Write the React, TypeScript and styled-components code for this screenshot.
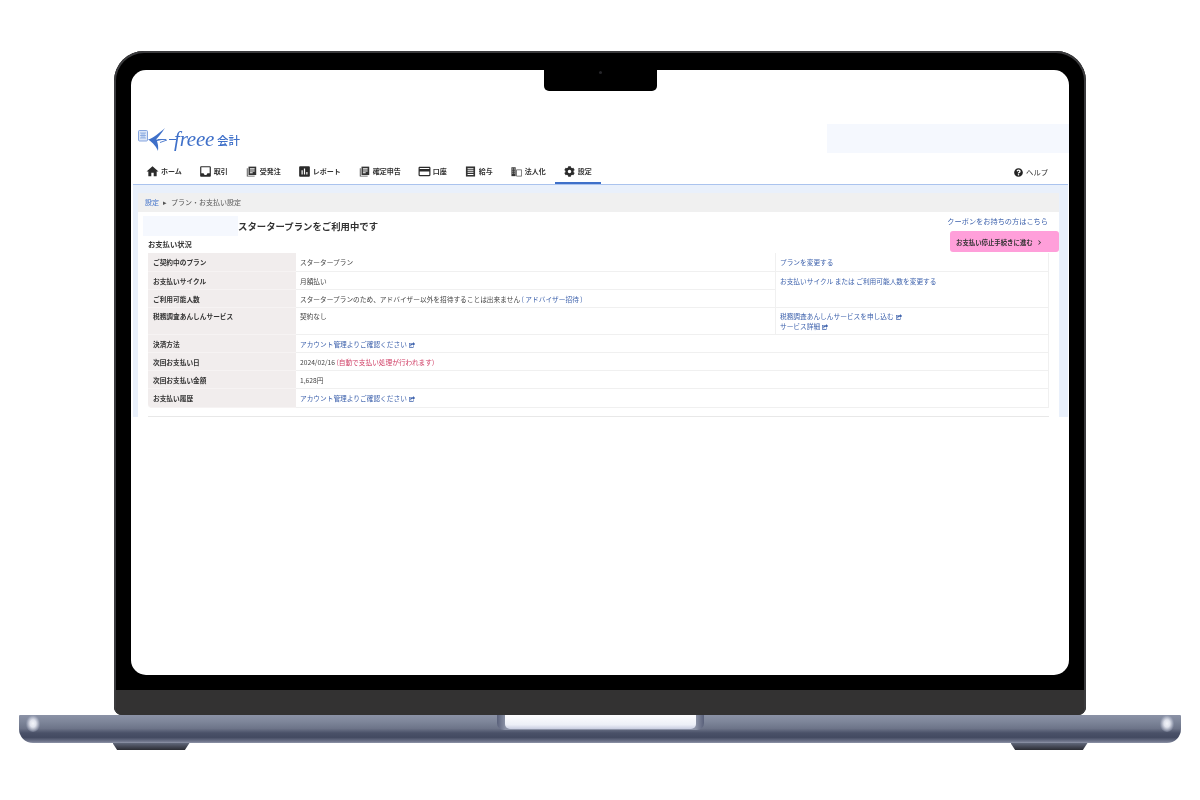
import React from "react";
import styled, { createGlobalStyle } from "styled-components";
import { FaCog, FaQuestionCircle, FaShareSquare } from "react-icons/fa";
import { MdAssessment, MdChevronRight, MdCreditCard, MdHome, MdInbox } from "react-icons/md";

const GlobalStyle = createGlobalStyle`
  html, body {
    margin: 0;
    padding: 0;
    background: #fff;
  }
  body {
    font-family: "Noto Sans CJK JP", "Liberation Sans", sans-serif;
    color: #333;
  }
`;

const Stage = styled.div`
  width: 1200px;
  height: 800px;
  overflow: hidden;
  padding-top: 51px;
  box-sizing: border-box;
`;

const Lid = styled.div`
  width: 972px;
  height: 664px;
  margin: 0 auto;
  box-sizing: border-box;
  padding: 19px 17px 0;
  background: #000;
  border-radius: 30px 30px 8px 8px;
  box-shadow: inset 0 0 0 2px #3b3b3d;
  position: relative;
  overflow: hidden;
  display: flex;
  flex-direction: column;
`;

const Notch = styled.div`
  position: absolute;
  top: 19px;
  left: 430px;
  width: 113px;
  height: 21px;
  background: #000;
  border-radius: 0 0 5px 5px;
  z-index: 2;

  &::after {
    content: "";
    position: absolute;
    top: 1px;
    left: 55px;
    width: 3px;
    height: 3px;
    border-radius: 50%;
    background: #26262a;
  }
`;

const Screen = styled.div`
  height: 605px;
  flex: none;
  background: #fff;
  border-radius: 15px;
  overflow: hidden;
`;

const Blurred = styled.div`
  filter: blur(0.5px);
`;

const Chin = styled.div`
  margin: 15px -15px 0;
  flex: 1;
  background: #333232;
  border-radius: 0 0 7px 7px;
`;

const Base = styled.div`
  width: 1162px;
  height: 28px;
  margin: 0 auto;
  position: relative;
  border-radius: 1px 1px 14px 14px;
  background: linear-gradient(
    180deg,
    #8b92a6 0%,
    #7d8599 25%,
    #6d7489 48%,
    #4a5168 64%,
    #434a61 80%,
    #6f758b 94%,
    #8f95a8 100%
  );
`;

const BaseGlow = styled.div<{ $side: "left" | "right" }>`
  position: absolute;
  top: 0;
  ${(p) => p.$side}: 7px;
  width: 14px;
  height: 17px;
  border-radius: 50%;
  background: radial-gradient(ellipse at center, #f3f5fa 0%, #dfe2ec 30%, rgba(150, 157, 178, 0.55) 65%, rgba(125, 133, 153, 0) 100%);
`;

const Hinge = styled.div`
  position: absolute;
  top: 0;
  left: 478px;
  width: 207px;
  height: 15px;
  padding: 0 8px;
  box-sizing: border-box;
  background: linear-gradient(90deg, #59607a 0%, #8b92a6 4%, #8b92a6 96%, #59607a 100%);
  border-radius: 0 0 7px 7px;
`;

const HingeLight = styled.div`
  height: 14px;
  background: linear-gradient(180deg, #fdfdff 0%, #eceff7 70%, #c7cce0 100%);
  border-radius: 0 0 5px 5px;
`;

const Feet = styled.div`
  width: 975px;
  margin: 0 auto;
  display: flex;
  justify-content: space-between;
`;

const Foot = styled.div`
  width: 77px;
  height: 7px;
  clip-path: polygon(0 0, 100% 0, 94% 100%, 6% 100%);
  background: linear-gradient(180deg, #60677a 0%, #3d404c 65%, #2a2c33 100%);
`;

const Header = styled.header`
  height: 90px;
  padding: 54px 0 0 7px;
  box-sizing: border-box;
  display: flex;
  justify-content: space-between;
`;

const Logo = styled.div`
  display: flex;
  align-items: center;
  height: 30px;
  color: #3f70c9;
`;

const LogoWord = styled.span`
  font-family: "Liberation Serif", serif;
  font-style: italic;
  font-size: 21px;
  letter-spacing: -0.2px;
  margin-left: -3px;
  width: 43px;
`;

const LogoProduct = styled.span`
  font-size: 11.5px;
  font-weight: 500;
  margin-top: 1px;
`;

const HeaderBanner = styled.div`
  width: 242px;
  height: 29px;
  background: #f5f8fe;
`;

const Nav = styled.nav`
  height: 24px;
  padding: 0 21px 0 7px;
  display: flex;
  align-items: stretch;
`;

const NavItem = styled.a<{ $active?: boolean }>`
  display: flex;
  align-items: center;
  gap: 3px;
  padding: 0 9px;
  font-size: 7px;
  font-weight: 700;
  color: #333;
  height: 24px;
  box-sizing: border-box;
  border-bottom: ${(p) => (p.$active ? "2px solid #3f70c9" : "2px solid transparent")};

  svg {
    width: 11px;
    height: 11px;
    flex: none;
    color: #2b2b2b;
  }
`;

const HomeIcon = styled(MdHome)`
  transform: scale(1.3);
`;

const TrayIcon = styled(MdInbox)`
  transform: scale(1.3);
`;

const ReportIcon = styled(MdAssessment)`
  transform: scale(1.3);
`;

const CardIcon = styled(MdCreditCard)`
  transform: scale(1.3);
`;

const HelpLink = styled.a`
  margin-left: auto;
  display: flex;
  align-items: center;
  gap: 3px;
  height: 24px;
  font-size: 7.3px;
  color: #333;

  svg {
    width: 9px;
    height: 9px;
    color: #222;
  }
`;

const Page = styled.main`
  margin: 0 1px 0 2px;
  padding: 8px 9px 0 5px;
  background: #e9f0fb;
  border-top: 1px solid #aac3ee;
`;

const Breadcrumb = styled.div`
  height: 19px;
  padding: 0 7px 2px;
  box-sizing: border-box;
  display: flex;
  align-items: center;
  gap: 4px;
  background: #f0f0f0;
  font-size: 7px;
  color: #555;
`;

const CrumbLink = styled.a`
  color: #3f70c9;
`;

const Panel = styled.section`
  background: #fff;
  padding: 0 10px 8px;
  height: 205px;
  box-sizing: border-box;
`;

const PanelTop = styled.div`
  height: 41px;
  display: flex;
  justify-content: space-between;
`;

const TitleColumn = styled.div`
  margin-left: -5px;
  padding-top: 4px;
`;

const TitleRow = styled.div`
  display: flex;
  align-items: center;
  height: 20px;
`;

const TitleBlank = styled.div`
  width: 95px;
  height: 20px;
  background: #f5f8fe;
`;

const Title = styled.h1`
  margin: 0;
  font-size: 9.4px;
  font-weight: 700;
  color: #333;
`;

const SectionHeading = styled.h2`
  margin: 3px 0 0 5px;
  font-size: 7.3px;
  line-height: 11px;
  font-weight: 700;
  color: #333;
`;

const ActionColumn = styled.div`
  margin-right: -10px;
  display: flex;
  flex-direction: column;
  align-items: flex-end;
`;

const CouponLink = styled.a`
  margin: 4px 11px 0 0;
  font-size: 7.2px;
  line-height: 10px;
  color: #3f63ad;
`;

const StopButton = styled.a`
  margin-top: 5px;
  width: 109px;
  height: 21px;
  padding: 2px 15px 0 6px;
  box-sizing: border-box;
  display: flex;
  align-items: center;
  justify-content: space-between;
  border-radius: 3px;
  background: #ff9fda;
  font-size: 6.4px;
  font-weight: 700;
  color: #333;

  svg {
    width: 9px;
    height: 9px;
  }
`;

const Table = styled.table`
  width: 901px;
  table-layout: fixed;
  border-collapse: separate;
  border-spacing: 0;
  font-size: 6.7px;
  color: #444;
`;

const Row = styled.tr<{ $h: number; $tight?: boolean }>`
  height: ${(p) => p.$h}px;

  th,
  td {
    padding-top: ${(p) => (p.$tight ? "3px" : "4px")};
  }
`;

const Label = styled.th`
  width: 148px;
  padding: 0 5px;
  box-sizing: border-box;
  vertical-align: top;
  text-align: left;
  font-weight: 700;
  color: #333;
  background: #f1eded;
  border-bottom: 1px solid #f6f3f3;
  line-height: 11px;

  tr:last-child & {
    border-radius: 0 0 0 4px;
  }
`;

const Cell = styled.td`
  padding: 0 4px;
  box-sizing: border-box;
  vertical-align: top;
  line-height: 11px;
  border-bottom: 1px solid #f0f0f0;
  border-right: 1px solid #f0f0f0;
`;

const ValueCell = styled(Cell)`
  width: 479px;
  border-right: ${(p) => (p.colSpan === 2 ? "1px solid #f0f0f0" : "none")};
`;

const ActionCell = styled(Cell)`
  border-left: 1px solid #f0f0f0;
  line-height: 10px;
`;

const TextLink = styled.a`
  color: #3f63ad;
`;

const Warning = styled.span`
  color: #cf3a62;
`;

const External = styled(FaShareSquare)`
  width: 6px;
  height: 6px;
  margin-left: 2px;
  vertical-align: -0.5px;
`;

const TableEnd = styled.div`
  margin-top: 8px;
  height: 1px;
  background: #e8e8e8;
`;

const LogoMark = () => (
  <svg width="39" height="25" viewBox="0 0 39 25" fill="none">
    <rect x="0.5" y="3.5" width="9" height="10.5" rx="1" fill="#dce6f7" stroke="#6d93d8" strokeWidth="0.8" />
    <path d="M2 6h6M2 8.5h6M2 11h6M4 6v5M6 6v5" stroke="#6d93d8" strokeWidth="0.6" />
    <path d="M10 12.5 C15 11.5 21 6 27 1 C23 7 20.5 10 18 12.5 L27 12.2 L19 14 C20 17.5 20.5 20 20 24 C18 19.5 15.5 16 10 12.5Z" fill="#3f70c9" />
    <path d="M20 12.5h8M22 15.5l7-2.5" stroke="#3f70c9" strokeWidth="0.9" />
    <path d="M31 12.5h7" stroke="#3f70c9" strokeWidth="1" />
  </svg>
);

const DocsIcon = () => (
  <svg viewBox="0 0 14 14">
    <path d="M1 3h1.2v9.3H11V13.5H1z" fill="#555" />
    <path d="M3.2 .8h9.8v10.7H3.2z" fill="#333" />
    <path d="M5 3h6v1.6H5zM5 5.8h6v1.2H5zM5 8h3.5v1.2H5z" fill="#fff" />
  </svg>
);

const LedgerIcon = () => (
  <svg viewBox="0 0 12 12">
    <path d="M1 .5h10v11H1z" fill="#333" />
    <path d="M2.8 2.5h6.4v1H2.8zM2.8 4.6h6.4v1H2.8zM2.8 6.7h6.4v1H2.8zM2.8 8.8h6.4v1H2.8z" fill="#fff" />
  </svg>
);

const BuildingIcon = () => (
  <svg viewBox="0 0 13 12">
    <path d="M.5 1h5v10.5h-5z" fill="#333" />
    <path d="M1.5 2.5h1v1h-1zM3.4 2.5h1v1h-1zM1.5 5h1v1h-1zM3.4 5h1v1h-1zM1.5 7.5h1v1h-1zM3.4 7.5h1v1h-1z" fill="#fff" />
    <path d="M6.5 4h6v7.5h-6z" fill="none" stroke="#555" strokeWidth="0.9" />
  </svg>
);

const navItems: { label: string; icon: React.ReactNode; active?: boolean }[] = [
  { label: "ホーム", icon: <HomeIcon /> },
  { label: "取引", icon: <TrayIcon /> },
  { label: "受発注", icon: <DocsIcon /> },
  { label: "レポート", icon: <ReportIcon /> },
  { label: "確定申告", icon: <DocsIcon /> },
  { label: "口座", icon: <CardIcon /> },
  { label: "給与", icon: <LedgerIcon /> },
  { label: "法人化", icon: <BuildingIcon /> },
  { label: "設定", icon: <FaCog />, active: true },
];

const App: React.FC = () => (
  <Stage>
    <GlobalStyle />
    <Lid>
      <Notch />
      <Screen>
        <Blurred>
          <Header>
            <Logo>
              <LogoMark />
              <LogoWord>freee</LogoWord>
              <LogoProduct>会計</LogoProduct>
            </Logo>
            <HeaderBanner />
          </Header>
          <Nav>
            {navItems.map((item) => (
              <NavItem key={item.label} $active={item.active}>
                {item.icon}
                {item.label}
              </NavItem>
            ))}
            <HelpLink>
              <FaQuestionCircle />
              ヘルプ
            </HelpLink>
          </Nav>
          <Page>
            <Breadcrumb>
              <CrumbLink>設定</CrumbLink>
              <span>▸</span>
              <span>プラン・お支払い設定</span>
            </Breadcrumb>
            <Panel>
              <PanelTop>
                <TitleColumn>
                  <TitleRow>
                    <TitleBlank />
                    <Title>スタータープランをご利用中です</Title>
                  </TitleRow>
                  <SectionHeading>お支払い状況</SectionHeading>
                </TitleColumn>
                <ActionColumn>
                  <CouponLink>クーポンをお持ちの方はこちら</CouponLink>
                  <StopButton>
                    お支払い停止手続きに進む
                    <MdChevronRight />
                  </StopButton>
                </ActionColumn>
              </PanelTop>
              <Table>
                <tbody>
                  <Row $h={19}>
                    <Label>ご契約中のプラン</Label>
                    <ValueCell>スタータープラン</ValueCell>
                    <ActionCell>
                      <TextLink>プランを変更する</TextLink>
                    </ActionCell>
                  </Row>
                  <Row $h={18}>
                    <Label>お支払いサイクル</Label>
                    <ValueCell>月額払い</ValueCell>
                    <ActionCell rowSpan={2}>
                      <TextLink>お支払いサイクル または ご利用可能人数を変更する</TextLink>
                    </ActionCell>
                  </Row>
                  <Row $h={18}>
                    <Label>ご利用可能人数</Label>
                    <ValueCell>
                      スタータープランのため、アドバイザー以外を招待することは出来ません <TextLink>( アドバイザー招待 )</TextLink>
                    </ValueCell>
                  </Row>
                  <Row $h={27} $tight>
                    <Label>税務調査あんしんサービス</Label>
                    <ValueCell>契約なし</ValueCell>
                    <ActionCell>
                      <TextLink>
                        税務調査あんしんサービスを申し込む
                        <External />
                        <br />
                        サービス詳細
                        <External />
                      </TextLink>
                    </ActionCell>
                  </Row>
                  <Row $h={18}>
                    <Label>決済方法</Label>
                    <ValueCell colSpan={2}>
                      <TextLink>
                        アカウント管理よりご確認ください
                        <External />
                      </TextLink>
                    </ValueCell>
                  </Row>
                  <Row $h={18}>
                    <Label>次回お支払い日</Label>
                    <ValueCell colSpan={2}>
                      2024/02/16 <Warning>(自動で支払い処理が行われます)</Warning>
                    </ValueCell>
                  </Row>
                  <Row $h={18}>
                    <Label>次回お支払い金額</Label>
                    <ValueCell colSpan={2}>1,628円</ValueCell>
                  </Row>
                  <Row $h={19}>
                    <Label>お支払い履歴</Label>
                    <ValueCell colSpan={2}>
                      <TextLink>
                        アカウント管理よりご確認ください
                        <External />
                      </TextLink>
                    </ValueCell>
                  </Row>
                </tbody>
              </Table>
              <TableEnd />
            </Panel>
          </Page>
        </Blurred>
      </Screen>
      <Chin />
    </Lid>
    <Base>
      <BaseGlow $side="left" />
      <BaseGlow $side="right" />
      <Hinge>
        <HingeLight />
      </Hinge>
    </Base>
    <Feet>
      <Foot />
      <Foot />
    </Feet>
  </Stage>
);

export default App;
